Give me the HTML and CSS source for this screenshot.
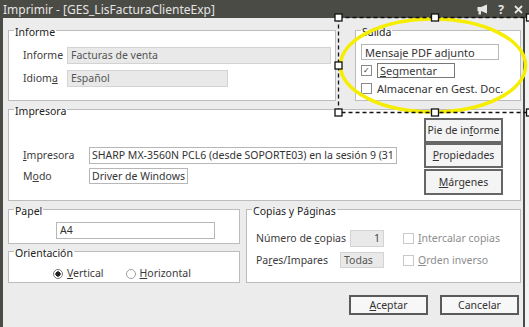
FILE: index.html
```html
<!DOCTYPE html>
<html lang="es">

<head>
    <meta charset="UTF-8">
    <title>Imprimir</title>
    <link rel="stylesheet" href="styles.css">
</head>

<body>
    <div class="window">
        <div class="titlebar">
            <span class="title">Imprimir - [GES_LisFacturaClienteExp]</span>
            <div class="title-icons">
                <svg width="11" height="11" viewBox="0 0 11 11">
                    <path d="M0.5 3 H4 L10 0.5 V9.5 L4 7 H0.5 Z" fill="#e6e6e6" />
                    <rect x="1.5" y="7" width="2.5" height="3.5" fill="#e6e6e6" />
                </svg>
                <span class="help">?</span>
                <svg width="9" height="9" viewBox="0 0 9 9">
                    <path d="M1 1 L8 8 M8 1 L1 8" stroke="#e6e6e6" stroke-width="1.8" />
                </svg>
            </div>
        </div>

        <div class="frame">
            <div class="row-top">
                <fieldset class="group informe">
                    <legend>Informe</legend>
                    <div class="rows">
                        <div class="field">
                            <label class="lbl w44">Informe</label>
                            <span class="box ro wide">Facturas de venta</span>
                        </div>
                        <div class="field">
                            <label class="lbl w44">Idiom<u>a</u></label>
                            <span class="box ro lang">Español</span>
                        </div>
                    </div>
                </fieldset>

                <fieldset class="group salida">
                    <legend>Salida</legend>
                    <div class="out-rows">
                        <span class="box plain mail">Mensaje PDF adjunto</span>
                        <div class="check-row">
                            <span class="check on">&#10003;</span>
                            <span class="focus"><u>S</u>egmentar</span>
                        </div>
                        <div class="check-row">
                            <span class="check"></span>
                            <span class="check-text">Almacenar en Gest. Doc.</span>
                        </div>
                    </div>
                </fieldset>
            </div>

            <fieldset class="group impresora">
                <legend>Impresora</legend>
                <div class="printer">
                    <div class="printer-fields">
                        <div class="field">
                            <label class="lbl w66"><u>I</u>mpresora</label>
                            <span class="box plain printer-name">SHARP MX-3560N PCL6 (desde SOPORTE03) en la sesión 9 (31</span>
                        </div>
                        <div class="field">
                            <label class="lbl w66">M<u>o</u>do</label>
                            <span class="box plain mode">Driver de Windows</span>
                        </div>
                    </div>
                    <div class="side-buttons">
                        <button class="btn">Pie de in<u>f</u>orme</button>
                        <button class="btn"><u>P</u>ropiedades</button>
                        <button class="btn"><u>M</u>árgenes</button>
                    </div>
                </div>
            </fieldset>

            <div class="row-bottom">
                <div class="left-col">
                    <fieldset class="group papel">
                        <legend>Papel</legend>
                        <span class="box plain paper">A4</span>
                    </fieldset>
                    <fieldset class="group orient">
                        <legend>Orientación</legend>
                        <div class="radios">
                            <span class="radio on"></span>
                            <span class="radio-text"><u>V</u>ertical</span>
                            <span class="radio"></span>
                            <span class="radio-text"><u>H</u>orizontal</span>
                        </div>
                    </fieldset>
                </div>

                <fieldset class="group copias">
                    <legend>Copias y Páginas</legend>
                    <div class="copy-rows">
                        <div class="copy-row">
                            <div class="copy-field">
                                <label class="lbl">Número de <u>c</u>opias</label>
                                <span class="box ro num">1</span>
                            </div>
                            <span class="check off"></span>
                            <span class="dim"><u>I</u>ntercalar copias</span>
                        </div>
                        <div class="copy-row">
                            <div class="copy-field">
                                <label class="lbl">Pa<u>r</u>es/Impares</label>
                                <span class="box ro todas">Todas</span>
                            </div>
                            <span class="check off"></span>
                            <span class="dim"><u>O</u>rden inverso</span>
                        </div>
                    </div>
                </fieldset>
            </div>

            <div class="actions">
                <button class="btn main"><u>A</u>ceptar</button>
                <button class="btn main">Cancelar</button>
            </div>
        </div>

        <!-- marca de selección del diseñador -->
        <svg class="overlay" width="529" height="327" viewBox="0 0 529 327">
            <ellipse cx="433" cy="65.5" rx="92.5" ry="46.5" fill="none" stroke="#f6ee00" stroke-width="3.6" />
            <path d="M338.5 17.5 H531 M338.5 17.5 V112.5 H531" fill="none" stroke="#111" stroke-width="1.3" stroke-dasharray="4 3" />
            <g fill="#fff" stroke="#111" stroke-width="1.3">
                <rect x="335" y="14" width="7" height="7" />
                <rect x="431.5" y="14" width="7" height="7" />
                <rect x="526.5" y="14" width="7" height="7" />
                <rect x="335" y="62" width="7" height="7" />
                <rect x="335" y="109" width="7" height="7" />
                <rect x="431.5" y="109" width="7" height="7" />
                <rect x="526.5" y="109" width="7" height="7" />
            </g>
        </svg>
    </div>
</body>

</html>
```

FILE: styles.css
```css
* {
    box-sizing: border-box;
}

html,
body {
    margin: 0;
    padding: 0;
}

body {
    background: #f2f2f2;
    font-family: "Noto Sans", "Liberation Sans", sans-serif;
    font-size: 10.5px;
    line-height: 13px;
    color: #3a3a3a;
}

u {
    text-decoration-thickness: 1px;
    text-underline-offset: 1px;
}

.window {
    position: relative;
    width: 529px;
    height: 327px;
    overflow: hidden;
}

.titlebar {
    display: flex;
    align-items: center;
    height: 18px;
    padding: 0 6px 0 3px;
    background: #4b4b45;
    color: #e4e4e4;
}

.title {
    font-size: 12px;
}

.title-icons {
    display: flex;
    align-items: center;
    gap: 10px;
    margin-left: auto;
}

.help {
    font-size: 12px;
    font-weight: bold;
    color: #e6e6e6;
}

.frame {
    width: 525px;
    height: 309px;
    padding: 4px 2px 0 5px;
    background: #ececec;
    border-left: 3px solid #4b4b45;
    border-right: 2px solid #4b4b45;
}

/* cajas de grupo */
.group {
    margin: 0;
    padding: 0;
    min-width: 0;
    border: 1px solid #bcbcbc;
    background: #fff;
}

.group legend {
    margin-left: 5px;
    padding: 4px 1px 0;
    line-height: 13px;
    color: #222;
}

.row-top {
    display: flex;
    gap: 19px;
    height: 79px;
}

.informe {
    width: 328px;
    height: 79px;
}

.salida {
    width: 166px;
    height: 79px;
}

.rows {
    display: flex;
    flex-direction: column;
    gap: 6px;
    margin-top: 8px;
    padding-left: 14px;
}

.field {
    display: flex;
    align-items: center;
}

.lbl {
    color: #3c3c3c;
}

.w44 {
    width: 44px;
}

.w66 {
    width: 66px;
}

.box {
    display: block;
    height: 17px;
    padding: 0 3px;
    line-height: 15px;
    white-space: nowrap;
    overflow: hidden;
}

.ro {
    background: #e9e9e9;
    border: 1px solid #d3d3d3;
    color: #555;
}

.plain {
    background: #fff;
    border: 1px solid #b7b7b7;
    color: #333;
}

.wide {
    width: 264px;
}

.lang {
    width: 161px;
}

.out-rows {
    display: flex;
    flex-direction: column;
    margin-top: 5px;
    padding-left: 5px;
}

.mail {
    width: 138px;
    height: 16px;
    font-size: 11px;
}

.check-row {
    display: flex;
    align-items: center;
    gap: 5px;
    height: 16px;
    margin-top: 2px;
    font-size: 11px;
}

.check {
    display: inline-flex;
    align-items: center;
    justify-content: center;
    width: 11px;
    height: 11px;
    border: 1px solid #8a8a8a;
    background: #fff;
    font-size: 8px;
    line-height: 8px;
    color: #333;
}

.check.off {
    border-color: #c9c9c9;
}

.focus {
    width: 78px;
    height: 15px;
    padding-left: 2px;
    border: 1px solid #777;
    line-height: 13px;
}

.check-text {
    color: #333;
}

/* impresora */
.impresora {
    height: 100px;
}

.printer {
    display: flex;
    padding: 0 17px 0 14px;
}

.printer-fields {
    display: flex;
    flex-direction: column;
    gap: 4px;
    flex: 1;
    padding-top: 29px;
}

.printer-name {
    width: 308px;
    padding-left: 2px;
}

.mode {
    width: 99px;
    height: 16px;
    padding-left: 2px;
}

.side-buttons {
    display: flex;
    flex-direction: column;
    width: 79px;
}

.btn {
    height: 25px;
    padding: 0;
    border: 2px solid #666;
    background: #f4f4f4;
    font: inherit;
    color: #333;
}

.side-buttons .btn:last-child {
    height: 26px;
    margin-top: 1px;
}

/* parte inferior */
.row-bottom {
    display: flex;
    gap: 6px;
    height: 82px;
}

.left-col {
    display: flex;
    flex-direction: column;
    width: 232px;
}

.papel {
    height: 43px;
}

.paper {
    width: 159px;
    height: 17px;
    margin: 4px 0 0 47px;
}

.orient {
    height: 40px;
    margin-top: -1px;
}

.radios {
    display: flex;
    align-items: center;
    margin: 7px 0 0 44px;
}

.radio {
    width: 10px;
    height: 10px;
    border: 1px solid #a0a0a0;
    border-radius: 50%;
    background: #fff;
}

.radio.on {
    background: radial-gradient(circle, #222 0 2.4px, #fff 2.9px);
    border-color: #777;
}

.radio-text {
    margin: 0 22px 0 4px;
}

.copias {
    width: 275px;
    height: 82px;
}

.copy-rows {
    display: flex;
    flex-direction: column;
    gap: 5px;
    margin-top: 12px;
    padding-left: 9px;
}

.copy-row {
    display: flex;
    align-items: center;
}

.copy-field {
    display: flex;
    align-items: center;
    justify-content: space-between;
    width: 128px;
    margin-right: 19px;
}

.num {
    width: 34px;
    text-align: right;
    color: #444;
}

.todas {
    width: 44px;
    height: 16px;
    color: #555;
}

.dim {
    margin-left: 4px;
    color: #8d8d8d;
}

.actions {
    display: flex;
    justify-content: flex-end;
    gap: 12px;
    margin-top: 12px;
    padding-right: 2px;
}

.btn.main {
    width: 79px;
    height: 20px;
    border: 2px solid #5a5a5a;
    background: #f7f7f7;
}

.overlay {
    position: absolute;
    top: 0;
    left: 0;
    pointer-events: none;
}
```
